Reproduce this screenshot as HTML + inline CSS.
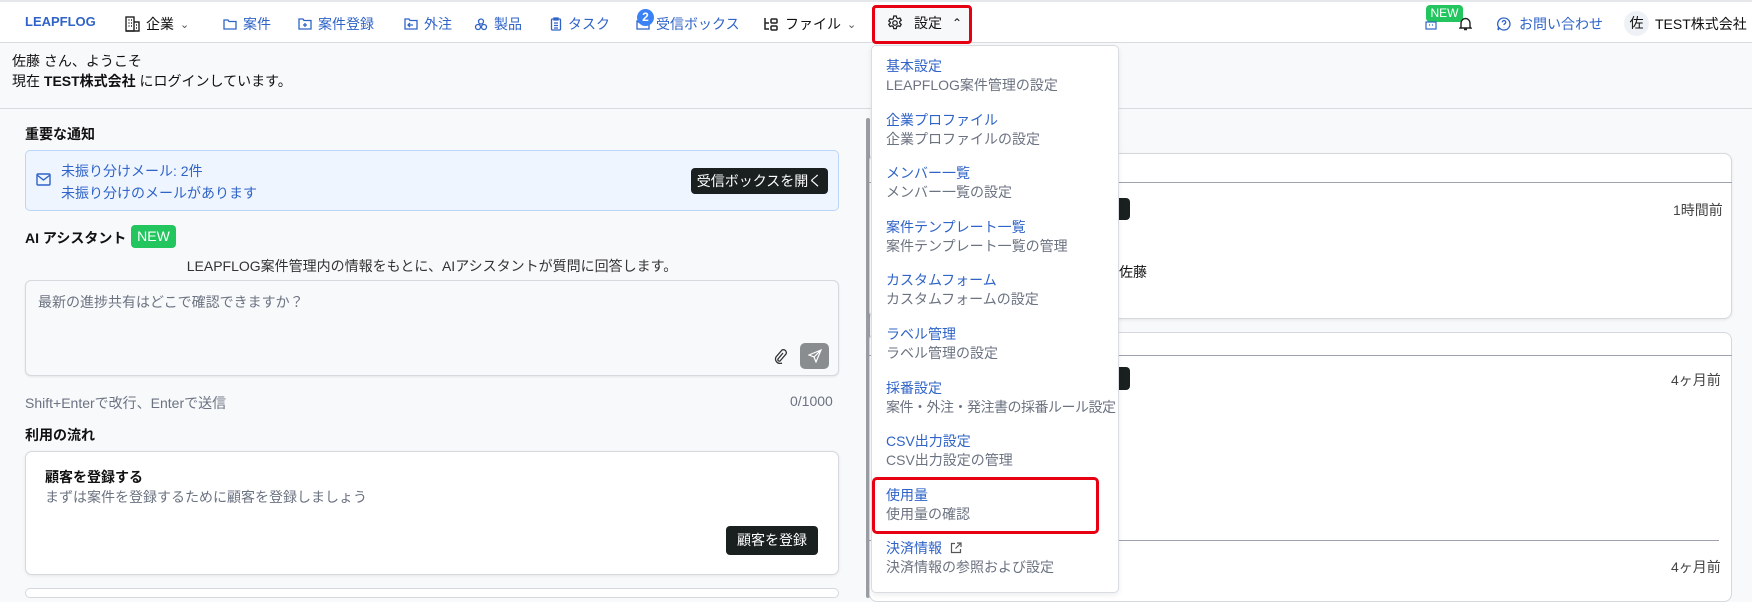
<!DOCTYPE html>
<html><head><meta charset="utf-8">
<style>
*{box-sizing:border-box;margin:0;padding:0}
body{width:1752px;height:590px;overflow:hidden;background:#f8f9fb;font-family:"Liberation Sans","Noto Sans CJK JP",sans-serif;font-size:14px;color:#111;position:relative}
.a{position:absolute;white-space:nowrap}
.nav{position:absolute;left:0;top:0;width:1752px;height:43px;background:#fff;border-top:2px solid #e5e7eb;border-bottom:1px solid #d8dbe0}
.blue{color:#2f63c7}
.ni{position:absolute;top:12px;font-size:14px;display:flex;align-items:center;gap:6px;white-space:nowrap}
svg{display:block}
.gray{color:#6b7280}
.dd{position:absolute;left:871px;top:45px;width:248px;height:548px;background:#fff;border:1px solid #d9dce1;border-radius:5px;box-shadow:0 2px 6px rgba(0,0,0,.08)}
.di{position:absolute;left:14px;font-size:14px;line-height:19px;white-space:nowrap}
.di .t{color:#2f63c7}
.di .s{color:#6b7280}
</style></head><body>
<div class="nav">
 <div class="a" style="left:25px;top:12px;font-weight:bold;color:#2f63c7;font-size:13px;">LEAPFLOG</div>
 <div class="ni" style="left:125px"><svg width="15" height="16" viewBox="0 0 15 16" fill="none" stroke="#222" stroke-width="1.4"><rect x="1" y="1" width="8" height="14"/><path d="M9 6h5v9H1M3.5 4h1M6 4h1M3.5 7h1M6 7h1M3.5 10h1M6 10h1M11 9h1M11 12h1"/></svg><span>企業</span><span style="font-size:11px;color:#555">&#8964;</span></div>
 <div class="ni blue" style="left:223px"><svg width="14" height="12" viewBox="0 0 14 12" fill="none" stroke="#2f63c7" stroke-width="1.3"><path d="M1 2h4l1 1.5h7V11H1z"/></svg><span>案件</span></div>
 <div class="ni blue" style="left:298px"><svg width="14" height="12" viewBox="0 0 14 12" fill="none" stroke="#2f63c7" stroke-width="1.3"><path d="M1 1h4l1 1.5h7V11H1zM7 5v4M5 7h4"/></svg><span>案件登録</span></div>
 <div class="ni blue" style="left:404px"><svg width="14" height="12" viewBox="0 0 14 12" fill="none" stroke="#2f63c7" stroke-width="1.3"><path d="M1 1h4l1 1.5h7V11H1zM9 7H4m2-2L4 7l2 2"/></svg><span>外注</span></div>
 <div class="ni blue" style="left:474px"><svg width="14" height="13" viewBox="0 0 14 13" fill="none" stroke="#2f63c7" stroke-width="1.3"><circle cx="7" cy="3.5" r="2.5"/><circle cx="4" cy="9" r="2.5"/><circle cx="10" cy="9" r="2.5"/></svg><span>製品</span></div>
 <div class="ni blue" style="left:550px"><svg width="12" height="14" viewBox="0 0 12 14" fill="none" stroke="#2f63c7" stroke-width="1.3"><rect x="1.5" y="2" width="9" height="11" rx="1"/><path d="M4 1h4v2H4zM4 6h4M4 8.5h4M4 11h4"/></svg><span>タスク</span></div>
 <div class="ni blue" style="left:636px"><svg width="14" height="12" viewBox="0 0 14 12" fill="none" stroke="#2f63c7" stroke-width="1.3"><path d="M1 3h12v8H1zM1 3l6 4 6-4"/></svg><span>受信ボックス</span></div>
 <div class="a" style="left:637px;top:7px;width:17px;height:17px;border-radius:50%;background:#3b82f6;color:#fff;font-size:12px;text-align:center;line-height:17px;font-weight:bold">2</div>
 <div class="ni" style="left:763px"><svg width="16" height="15" viewBox="0 0 16 15" fill="none" stroke="#222" stroke-width="1.5"><path d="M2 1v11h4M2 6h4"/><rect x="8" y="2" width="6" height="4" rx="1"/><rect x="8" y="9" width="6" height="4" rx="1"/></svg><span>ファイル</span><span style="font-size:11px;color:#555">&#8964;</span></div>
 <div class="a" style="left:872px;top:3px;width:100px;height:39px;border:3px solid #e60012;border-radius:4px;background:#f7f8fa"></div>
 <div class="ni" style="left:886px;top:11px"><svg width="18" height="18" viewBox="0 0 24 24" fill="none" stroke="#222" stroke-width="1.7"><path d="M10.3 2.6h3.4l.5 2.6 1.9 1.1 2.5-.9 1.7 2.9-2 1.7v2.1l2 1.7-1.7 2.9-2.5-.9-1.9 1.1-.5 2.6h-3.4l-.5-2.6-1.9-1.1-2.5.9-1.7-2.9 2-1.7V11l-2-1.7 1.7-2.9 2.5.9 1.900-1.1z"/><circle cx="12" cy="12" r="3"/></svg><span style="margin-left:4px">設定</span><span style="font-size:12px;margin-left:4px">&#8963;</span></div>
 <div class="a" style="left:1426px;top:3px;width:37px;height:17px;background:#22c55e;color:#fff;border-radius:4px;font-size:12px;text-align:center;line-height:17px">NEW</div>
 <svg class="a" style="left:1425px;top:18px" width="12" height="10" viewBox="0 0 12 10" fill="none" stroke="#2f63c7" stroke-width="1.2"><rect x="1" y="2" width="10" height="7"/><path d="M4 5h1M7 5h1"/></svg>
 <svg class="a" style="left:1459px;top:14px" width="13" height="15" viewBox="0 0 13 15" fill="none" stroke="#222" stroke-width="1.4"><path d="M2 11V7a4.5 4.5 0 019 0v4l1 1H1zM5 13.5h3"/></svg>
 <div class="ni blue" style="left:1497px"><svg width="14" height="14" viewBox="0 0 14 14" fill="none" stroke="#2f63c7" stroke-width="1.3"><path d="M7 1a6 6 0 11-4.5 10L1 13l.5-3A6 6 0 017 1z"/><path d="M5.3 5.3a1.7 1.7 0 113 1c-.8.5-1.3.8-1.3 1.7M7 10v.2"/></svg><span style="margin-left:2px">お問い合わせ</span></div>
 <div class="a" style="left:1624px;top:9px;width:25px;height:25px;border-radius:50%;background:#eef1f6;text-align:center;line-height:25px;font-size:14px">佐</div>
 <div class="a" style="left:1655px;top:12px">TEST株式会社</div>
</div>
<div class="a" style="left:12px;top:51px;line-height:20px">佐藤 さん、ようこそ<br>現在 <b>TEST株式会社</b> にログインしています。</div>
<div class="a" style="left:0;top:108px;width:1752px;height:1px;background:#d8dbe0"></div>

<div class="a" style="left:25px;top:124px;font-weight:bold">重要な通知</div>
<div class="a" style="left:25px;top:150px;width:814px;height:61px;background:#eef5ff;border:1px solid #bcd5fb;border-radius:5px"></div>
<svg class="a" style="left:36px;top:173px" width="15" height="13" viewBox="0 0 15 13" fill="none" stroke="#2f63c7" stroke-width="1.4"><rect x="1" y="1" width="13" height="11" rx="1"/><path d="M1 2l6.5 5L14 2"/></svg>
<div class="a blue" style="left:61px;top:160px;line-height:22px">未振り分けメール: 2件<br>未振り分けのメールがあります</div>
<div class="a" style="left:691px;top:168px;width:137px;height:26px;background:#1a1f1f;color:#fff;border-radius:4px;text-align:center;line-height:26px">受信ボックスを開く</div>

<div class="a" style="left:25px;top:228px;font-weight:bold">AI アシスタント</div>
<div class="a" style="left:131px;top:225px;width:45px;height:23px;background:#22c55e;color:#fff;border-radius:4px;text-align:center;line-height:23px">NEW</div>
<div class="a" style="left:25px;top:256px;width:814px;text-align:center;color:#333">LEAPFLOG案件管理内の情報をもとに、AIアシスタントが質問に回答します。</div>
<div class="a" style="left:25px;top:280px;width:814px;height:96px;background:#f8f9fb;border:1px solid #d5d8dd;border-radius:6px;box-shadow:0 1px 2px rgba(0,0,0,.08)"></div>
<div class="a" style="left:38px;top:292px;color:#6b7280">最新の進捗共有はどこで確認できますか？</div>
<svg class="a" style="left:773px;top:348px" width="14" height="16" viewBox="0 0 14 16" fill="none" stroke="#333" stroke-width="1.3"><path d="M10 5l-5 6a1.5 1.5 0 002 2l6-7a3 3 0 00-4-4L3 9a4.5 4.5 0 006 6"/></svg>
<div class="a" style="left:800px;top:343px;width:29px;height:26px;background:#8a8d90;border-radius:5px"></div>
<svg class="a" style="left:808px;top:349px" width="14" height="14" viewBox="0 0 14 14" fill="none" stroke="#fff" stroke-width="1.2"><path d="M13 1L1 6l5 2 2 5zM6 8l7-7"/></svg>
<div class="a gray" style="left:25px;top:393px">Shift+Enterで改行、Enterで送信</div>
<div class="a gray" style="left:790px;top:393px">0/1000</div>

<div class="a" style="left:25px;top:425px;font-weight:bold">利用の流れ</div>
<div class="a" style="left:25px;top:451px;width:814px;height:124px;background:#fff;border:1px solid #d5d8dd;border-radius:7px;box-shadow:0 1px 3px rgba(0,0,0,.08)"></div>
<div class="a" style="left:45px;top:467px;font-weight:bold">顧客を登録する</div>
<div class="a gray" style="left:45px;top:487px">まずは案件を登録するために顧客を登録しましょう</div>
<div class="a" style="left:726px;top:526px;width:92px;height:29px;background:#1a1f1f;color:#fff;border-radius:4px;text-align:center;line-height:29px">顧客を登録</div>
<div class="a" style="left:25px;top:588px;width:814px;height:10px;background:#fff;border:1px solid #d5d8dd;border-radius:7px"></div>

<div class="a" style="left:866px;top:118px;width:4px;height:480px;background:#9a9ea4;border-radius:2px"></div>
<div class="a" style="left:869px;top:153px;width:863px;height:166px;background:#fff;border:1px solid #d5d8dd;border-radius:8px;box-shadow:0 1px 3px rgba(0,0,0,.08)"></div>
<div class="a" style="left:869px;top:182px;width:863px;height:1px;background:#9ca3af"></div>
<div class="a" style="left:1105px;top:198px;width:25px;height:22px;background:#1a1f1f;border-radius:4px"></div>
<div class="a" style="left:1119px;top:262px">佐藤</div>
<div class="a" style="left:1673px;top:200px;color:#444">1時間前</div>
<div class="a" style="left:869px;top:332px;width:863px;height:270px;background:#fff;border:1px solid #d5d8dd;border-radius:8px"></div>
<div class="a" style="left:869px;top:355px;width:863px;height:1px;background:#9ca3af"></div>
<div class="a" style="left:1105px;top:367px;width:25px;height:23px;background:#1a1f1f;border-radius:4px"></div>
<div class="a" style="left:1671px;top:370px;color:#444">4ヶ月前</div>
<div class="a" style="left:869px;top:540px;width:850px;height:1px;background:#9ca3af"></div>
<div class="a" style="left:1671px;top:557px;color:#444">4ヶ月前</div>

<div class="dd">
 <div class="di" style="top:11px"><div class="t">基本設定</div><div class="s">LEAPFLOG案件管理の設定</div></div>
 <div class="di" style="top:65px"><div class="t">企業プロファイル</div><div class="s">企業プロファイルの設定</div></div>
 <div class="di" style="top:118px"><div class="t">メンバー一覧</div><div class="s">メンバー一覧の設定</div></div>
 <div class="di" style="top:172px"><div class="t">案件テンプレート一覧</div><div class="s">案件テンプレート一覧の管理</div></div>
 <div class="di" style="top:225px"><div class="t">カスタムフォーム</div><div class="s">カスタムフォームの設定</div></div>
 <div class="di" style="top:279px"><div class="t">ラベル管理</div><div class="s">ラベル管理の設定</div></div>
 <div class="di" style="top:333px"><div class="t">採番設定</div><div class="s" style="letter-spacing:-0.5px">案件・外注・発注書の採番ルール設定</div></div>
 <div class="di" style="top:386px"><div class="t">CSV出力設定</div><div class="s">CSV出力設定の管理</div></div>
 <div class="di" style="top:440px"><div class="t">使用量</div><div class="s">使用量の確認</div></div>
 <div class="di" style="top:493px"><div class="t">決済情報 <svg style="display:inline;vertical-align:-1px;margin-left:4px" width="12" height="12" viewBox="0 0 12 12" fill="none" stroke="#555" stroke-width="1.2"><path d="M5 1.5H1.5v9h9V7M7 1h4v4M11 1L5.5 6.5"/></svg></div><div class="s">決済情報の参照および設定</div></div>
</div>
<div class="a" style="left:872px;top:477px;width:227px;height:57px;border:3px solid #e60012;border-radius:5px"></div>
</body></html>
